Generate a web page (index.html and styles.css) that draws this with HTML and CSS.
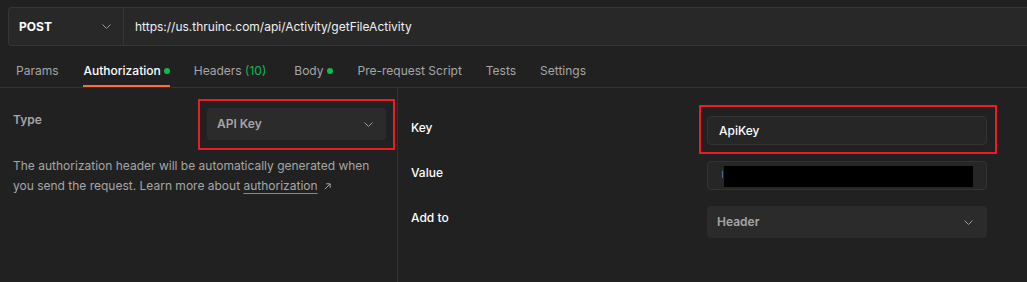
FILE: index.html
```html
<!DOCTYPE html>
<html lang="en">
<head>
    <meta charset="UTF-8">
    <title>Request - Authorization</title>
    <link rel="stylesheet" href="styles.css">
</head>
<body>
    <!-- Request line -->
    <div class="url-bar">
        <div class="method">
            <span>POST</span>
            <svg class="chevron" width="9" height="5" viewBox="0 0 9 5"><path d="M0.5 0.5L4.5 4.5L8.5 0.5" fill="none" stroke="#9a9a9a" stroke-width="1"/></svg>
        </div>
        <div class="url-text">https://us.thruinc.com/api/Activity/getFileActivity</div>
    </div>

    <!-- Request tabs -->
    <ul class="tabs">
        <li>Params</li>
        <li class="active">Authorization<span class="dot"></span></li>
        <li>Headers <span class="count">(10)</span></li>
        <li class="tab-body">Body<span class="dot"></span></li>
        <li>Pre-request Script</li>
        <li>Tests</li>
        <li>Settings</li>
    </ul>

    <!-- Authorization panel -->
    <div class="auth-panel">
        <div class="auth-left">
            <div class="type-row">
                <span class="type-label">Type</span>
                <div class="select type-select marked">
                    <span>API Key</span>
                    <svg class="chevron" width="9" height="5" viewBox="0 0 9 5"><path d="M0.5 0.5L4.5 4.5L8.5 0.5" fill="none" stroke="#9a9a9a" stroke-width="1"/></svg>
                </div>
            </div>
            <p class="help">
                The authorization header will be automatically generated when you send the request. Learn more about <a href="#">authorization</a><svg class="ext" width="7" height="7" viewBox="0 0 7 7"><path d="M0.8 6.2L6 1M2.2 0.8H6.2V4.8" fill="none" stroke="#a6a6a6" stroke-width="1"/></svg>
            </p>
        </div>

        <div class="auth-right">
            <div class="field-grid">
                <span class="field-label">Key</span>
                <div class="input marked key-input">ApiKey</div>

                <span class="field-label">Value</span>
                <div class="input"><span class="caret"></span><span class="redacted"></span></div>

                <span class="field-label">Add to</span>
                <div class="select addto-select">
                    <span>Header</span>
                    <svg class="chevron" width="9" height="5" viewBox="0 0 9 5"><path d="M0.5 0.5L4.5 4.5L8.5 0.5" fill="none" stroke="#9a9a9a" stroke-width="1"/></svg>
                </div>
            </div>
        </div>
    </div>
</body>
</html>
```

FILE: styles.css
```css
/* General Styling */
body {
    font-family: Inter, "Open Sans", sans-serif;
    font-size: 12px;
    line-height: 16px;
    margin: 0;
    padding: 0;
    background-color: #212121;
    color: #a6a6a6;
    height: 282px;
    overflow: hidden;
}

/* Request line */
.url-bar {
    display: flex;
    align-items: center;
    height: 37px;
    margin: 7px 0 0 8px;
    background: #282828;
    border: 1px solid #363636;
    border-right: none;
    border-radius: 4px 0 0 4px;
}

.method {
    display: flex;
    align-items: center;
    justify-content: space-between;
    width: 92px;
    height: 100%;
    padding: 0 12px 0 10px;
    border-right: 1px solid #363636;
    color: #ffffff;
    font-weight: 700;
}

.url-text {
    padding-left: 11px;
    color: #f0f0f0;
}

/* Tabs */
.tabs {
    list-style: none;
    display: flex;
    gap: 24px;
    margin: 1px 0 0;
    padding: 0 0 0 16px;
    border-bottom: 1px solid #333333;
}

.tabs li {
    display: flex;
    align-items: center;
    padding: 16px 0 6px;
    border-bottom: 2px solid transparent;
    white-space: pre;
}

.tabs li.active {
    color: #ffffff;
    font-weight: 500;
    border-bottom-color: #ff6c37;
    padding-left: 1px;
    padding-right: 0;
}

.tabs li.active .dot {
    margin-left: 3px;
}

.tabs .tab-body {
    margin-left: 4px;
}

.dot {
    display: inline-block;
    width: 6px;
    height: 6px;
    border-radius: 50%;
    background: #0cbb52;
    margin-left: 4px;
}

.count {
    color: #0cbb52;
}

/* Authorization panel */
.auth-panel {
    display: flex;
    height: 194px;
}

.auth-left {
    width: 373px;
    padding: 20px 11px 0 13px;
    border-right: 1px solid #333333;
}

.type-row {
    display: flex;
    justify-content: space-between;
    align-items: flex-start;
}

.type-label {
    padding-top: 4px;
    font-weight: 600;
}

.select {
    display: flex;
    align-items: center;
    justify-content: space-between;
    height: 32px;
    background: #2b2b2b;
    border-radius: 4px;
    font-weight: 600;
    color: #a6a6a6;
    box-sizing: border-box;
}

.type-select {
    width: 179px;
    padding: 0 13px 0 10px;
}

/* Red annotation frames drawn over the controls */
.marked {
    position: relative;
}

.marked::after {
    content: "";
    position: absolute;
    top: -9px;
    left: -9px;
    right: -9px;
    bottom: -10px;
    border: 2px solid #ed1c24;
    pointer-events: none;
}

.key-input::after {
    top: -12px;
    bottom: -10px;
    right: -11px;
}

.help {
    margin: 16px 0 0;
    line-height: 20px;
    color: #a6a6a6;
}

.help a {
    color: #a6a6a6;
    text-decoration: underline;
    text-underline-offset: 3px;
    text-decoration-color: #8a8a8a;
}

.ext {
    margin-left: 6px;
}

.auth-right {
    flex: 1;
    padding: 28px 0 0 13px;
}

.field-grid {
    display: grid;
    grid-template-columns: 296px 280px;
    grid-template-rows: 29px 29px 32px;
    row-gap: 16px;
}

.field-label {
    padding-top: 4px;
    color: #ffffff;
    font-weight: 500;
}

.input {
    display: flex;
    align-items: center;
    box-sizing: border-box;
    padding-left: 11px;
    background: #262626;
    border: 1px solid #333333;
    border-radius: 4px;
    color: #ffffff;
    font-weight: 500;
}

.caret {
    display: block;
    width: 1px;
    height: 7px;
    margin: 0 0 2px 3px;
    background: #4a6a9a;
}

.redacted {
    display: block;
    width: 249px;
    height: 21px;
    margin: 4px 0 0 1px;
    background: #000000;
    align-self: flex-start;
}

.addto-select {
    padding: 0 14px 0 10px;
}
```
